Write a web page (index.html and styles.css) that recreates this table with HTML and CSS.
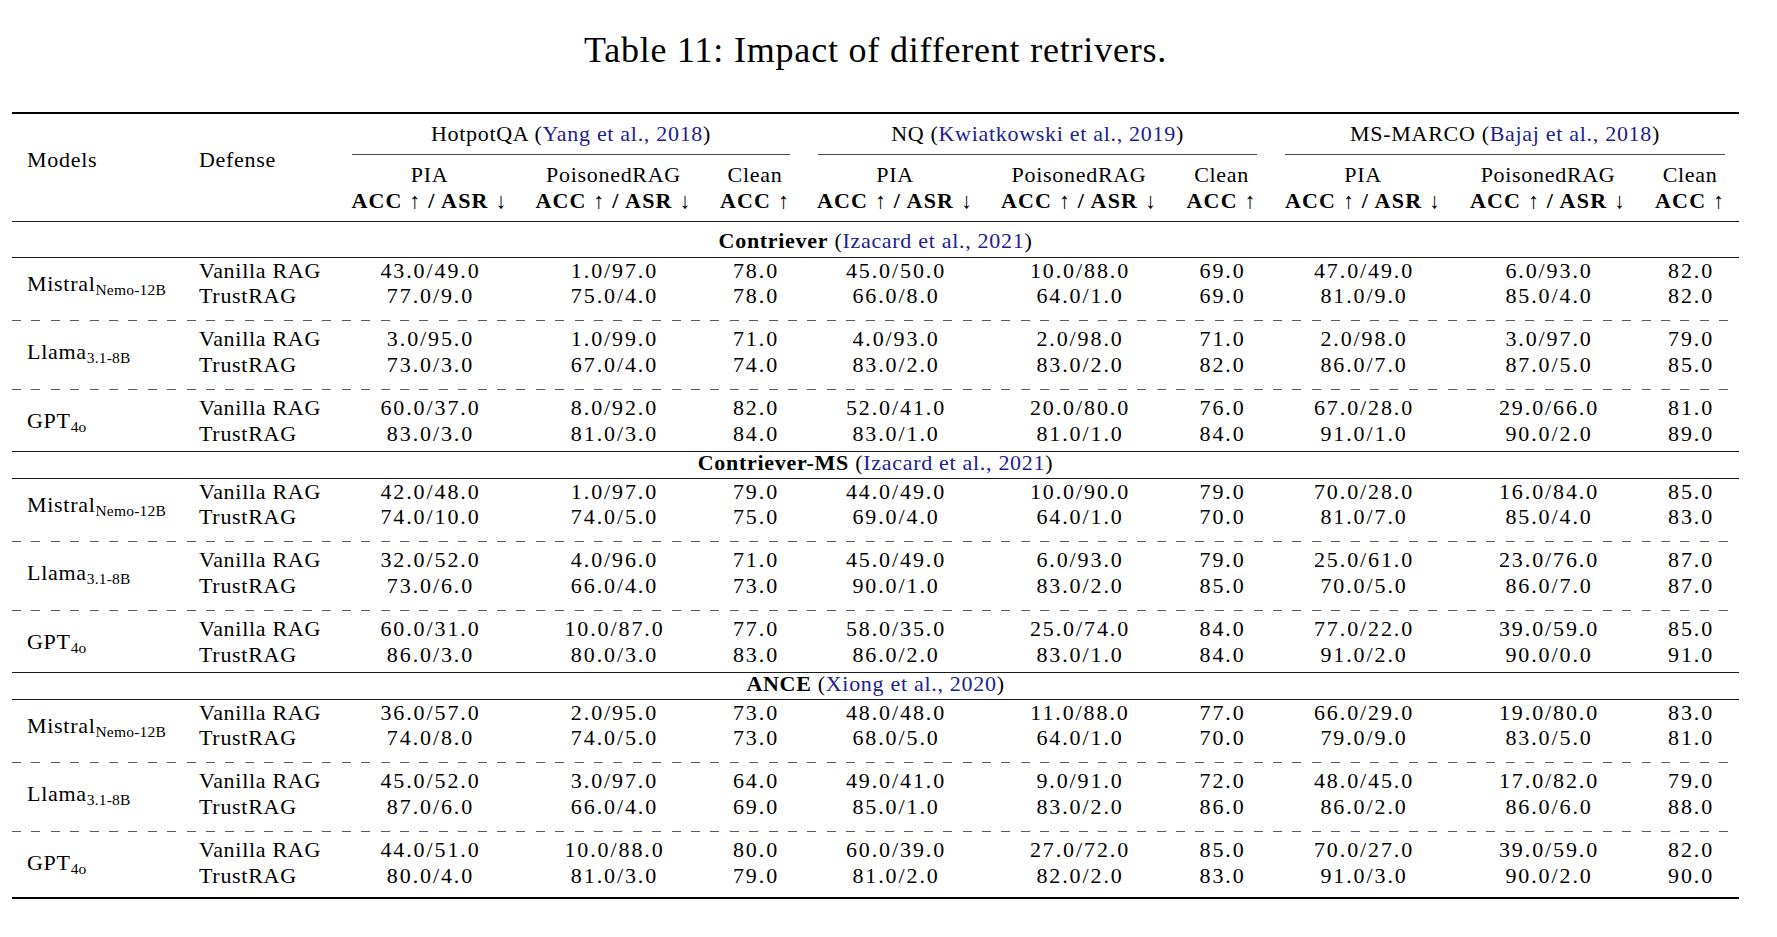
FILE: index.html
```html
<!DOCTYPE html>
<html lang="en">
<head>
<meta charset="utf-8">
<title>Table 11: Impact of different retrivers.</title>
<link rel="stylesheet" href="styles.css">
</head>
<body>
<div class="page">
  <div class="caption">Table 11: Impact of different retrivers.</div>
  <table class="tbl">
    <colgroup>
      <col class="c-model"><col class="c-def">
      <col class="c-a1"><col class="c-b1"><col class="c-c1">
      <col class="c-a2"><col class="c-b2"><col class="c-c2">
      <col class="c-a3"><col class="c-b3"><col class="c-c3">
    </colgroup>
    <thead>
      <tr class="h1">
        <th rowspan="3" class="lab">Models</th>
        <th rowspan="3" class="lab">Defense</th>
        <th colspan="3" class="grp"><div class="cmid">HotpotQA (<span class="cite">Yang et al., 2018</span>)</div></th>
        <th colspan="3" class="grp"><div class="cmid">NQ (<span class="cite">Kwiatkowski et al., 2019</span>)</div></th>
        <th colspan="3" class="grp"><div class="cmid">MS-MARCO (<span class="cite">Bajaj et al., 2018</span>)</div></th>
      </tr>
      <tr class="h2">
        <th>PIA</th><th>PoisonedRAG</th><th>Clean</th>
        <th>PIA</th><th>PoisonedRAG</th><th>Clean</th>
        <th>PIA</th><th>PoisonedRAG</th><th>Clean</th>
      </tr>
      <tr class="h3">
        <th><b>ACC</b> ↑ <b>/ ASR</b> ↓</th><th><b>ACC</b> ↑ <b>/ ASR</b> ↓</th><th><b>ACC</b> ↑</th>
        <th><b>ACC</b> ↑ <b>/ ASR</b> ↓</th><th><b>ACC</b> ↑ <b>/ ASR</b> ↓</th><th><b>ACC</b> ↑</th>
        <th><b>ACC</b> ↑ <b>/ ASR</b> ↓</th><th><b>ACC</b> ↑ <b>/ ASR</b> ↓</th><th><b>ACC</b> ↑</th>
      </tr>
    </thead>
    <tbody>
      <tr class="sec first"><td colspan="11"><b>Contriever</b> (<span class="cite">Izacard et al., 2021</span>)</td></tr>

      <tr class="r top g1"><td rowspan="2" class="model">Mistral<sub>Nemo-12B</sub></td><td class="def">Vanilla RAG</td><td>43.0/49.0</td><td>1.0/97.0</td><td>78.0</td><td>45.0/50.0</td><td>10.0/88.0</td><td>69.0</td><td>47.0/49.0</td><td>6.0/93.0</td><td>82.0</td></tr>
      <tr class="r bot g1"><td class="def">TrustRAG</td><td>77.0/9.0</td><td>75.0/4.0</td><td>78.0</td><td>66.0/8.0</td><td>64.0/1.0</td><td>69.0</td><td>81.0/9.0</td><td>85.0/4.0</td><td>82.0</td></tr>
      <tr class="dash"><td colspan="11"></td></tr>
      <tr class="r top g2"><td rowspan="2" class="model">Llama<sub>3.1-8B</sub></td><td class="def">Vanilla RAG</td><td>3.0/95.0</td><td>1.0/99.0</td><td>71.0</td><td>4.0/93.0</td><td>2.0/98.0</td><td>71.0</td><td>2.0/98.0</td><td>3.0/97.0</td><td>79.0</td></tr>
      <tr class="r bot g2"><td class="def">TrustRAG</td><td>73.0/3.0</td><td>67.0/4.0</td><td>74.0</td><td>83.0/2.0</td><td>83.0/2.0</td><td>82.0</td><td>86.0/7.0</td><td>87.0/5.0</td><td>85.0</td></tr>
      <tr class="dash"><td colspan="11"></td></tr>
      <tr class="r top g3"><td rowspan="2" class="model">GPT<sub>4o</sub></td><td class="def">Vanilla RAG</td><td>60.0/37.0</td><td>8.0/92.0</td><td>82.0</td><td>52.0/41.0</td><td>20.0/80.0</td><td>76.0</td><td>67.0/28.0</td><td>29.0/66.0</td><td>81.0</td></tr>
      <tr class="r bot g3"><td class="def">TrustRAG</td><td>83.0/3.0</td><td>81.0/3.0</td><td>84.0</td><td>83.0/1.0</td><td>81.0/1.0</td><td>84.0</td><td>91.0/1.0</td><td>90.0/2.0</td><td>89.0</td></tr>

      <tr class="sec"><td colspan="11"><b>Contriever-MS</b> (<span class="cite">Izacard et al., 2021</span>)</td></tr>

      <tr class="r top g1"><td rowspan="2" class="model">Mistral<sub>Nemo-12B</sub></td><td class="def">Vanilla RAG</td><td>42.0/48.0</td><td>1.0/97.0</td><td>79.0</td><td>44.0/49.0</td><td>10.0/90.0</td><td>79.0</td><td>70.0/28.0</td><td>16.0/84.0</td><td>85.0</td></tr>
      <tr class="r bot g1"><td class="def">TrustRAG</td><td>74.0/10.0</td><td>74.0/5.0</td><td>75.0</td><td>69.0/4.0</td><td>64.0/1.0</td><td>70.0</td><td>81.0/7.0</td><td>85.0/4.0</td><td>83.0</td></tr>
      <tr class="dash"><td colspan="11"></td></tr>
      <tr class="r top g2"><td rowspan="2" class="model">Llama<sub>3.1-8B</sub></td><td class="def">Vanilla RAG</td><td>32.0/52.0</td><td>4.0/96.0</td><td>71.0</td><td>45.0/49.0</td><td>6.0/93.0</td><td>79.0</td><td>25.0/61.0</td><td>23.0/76.0</td><td>87.0</td></tr>
      <tr class="r bot g2"><td class="def">TrustRAG</td><td>73.0/6.0</td><td>66.0/4.0</td><td>73.0</td><td>90.0/1.0</td><td>83.0/2.0</td><td>85.0</td><td>70.0/5.0</td><td>86.0/7.0</td><td>87.0</td></tr>
      <tr class="dash"><td colspan="11"></td></tr>
      <tr class="r top g3"><td rowspan="2" class="model">GPT<sub>4o</sub></td><td class="def">Vanilla RAG</td><td>60.0/31.0</td><td>10.0/87.0</td><td>77.0</td><td>58.0/35.0</td><td>25.0/74.0</td><td>84.0</td><td>77.0/22.0</td><td>39.0/59.0</td><td>85.0</td></tr>
      <tr class="r bot g3"><td class="def">TrustRAG</td><td>86.0/3.0</td><td>80.0/3.0</td><td>83.0</td><td>86.0/2.0</td><td>83.0/1.0</td><td>84.0</td><td>91.0/2.0</td><td>90.0/0.0</td><td>91.0</td></tr>

      <tr class="sec"><td colspan="11"><b>ANCE</b> (<span class="cite">Xiong et al., 2020</span>)</td></tr>

      <tr class="r top g1"><td rowspan="2" class="model">Mistral<sub>Nemo-12B</sub></td><td class="def">Vanilla RAG</td><td>36.0/57.0</td><td>2.0/95.0</td><td>73.0</td><td>48.0/48.0</td><td>11.0/88.0</td><td>77.0</td><td>66.0/29.0</td><td>19.0/80.0</td><td>83.0</td></tr>
      <tr class="r bot g1"><td class="def">TrustRAG</td><td>74.0/8.0</td><td>74.0/5.0</td><td>73.0</td><td>68.0/5.0</td><td>64.0/1.0</td><td>70.0</td><td>79.0/9.0</td><td>83.0/5.0</td><td>81.0</td></tr>
      <tr class="dash"><td colspan="11"></td></tr>
      <tr class="r top g2"><td rowspan="2" class="model">Llama<sub>3.1-8B</sub></td><td class="def">Vanilla RAG</td><td>45.0/52.0</td><td>3.0/97.0</td><td>64.0</td><td>49.0/41.0</td><td>9.0/91.0</td><td>72.0</td><td>48.0/45.0</td><td>17.0/82.0</td><td>79.0</td></tr>
      <tr class="r bot g2"><td class="def">TrustRAG</td><td>87.0/6.0</td><td>66.0/4.0</td><td>69.0</td><td>85.0/1.0</td><td>83.0/2.0</td><td>86.0</td><td>86.0/2.0</td><td>86.0/6.0</td><td>88.0</td></tr>
      <tr class="dash"><td colspan="11"></td></tr>
      <tr class="r top g3 end"><td rowspan="2" class="model">GPT<sub>4o</sub></td><td class="def">Vanilla RAG</td><td>44.0/51.0</td><td>10.0/88.0</td><td>80.0</td><td>60.0/39.0</td><td>27.0/72.0</td><td>85.0</td><td>70.0/27.0</td><td>39.0/59.0</td><td>82.0</td></tr>
      <tr class="r bot g3 end"><td class="def">TrustRAG</td><td>80.0/4.0</td><td>81.0/3.0</td><td>79.0</td><td>81.0/2.0</td><td>82.0/2.0</td><td>83.0</td><td>91.0/3.0</td><td>90.0/2.0</td><td>90.0</td></tr>
    </tbody>
  </table>
</div>
</body>
</html>
```

FILE: styles.css
```css
* { box-sizing: border-box; }

html, body {
  margin: 0;
  background: #ffffff;
}

body {
  font-family: "Liberation Serif", "Times New Roman", serif;
  color: #000000;
}

.page {
  padding-top: 32px;
}

.caption {
  width: 1727px;
  margin-left: 12px;
  font-size: 36px;
  line-height: 36px;
  letter-spacing: 0.8px;
  text-align: center;
}

.tbl {
  margin: 44px 0 0 12px;
  width: 1727px;
  table-layout: fixed;
  border-collapse: separate;
  border-spacing: 0;
  border-top: 2px solid #000;
  border-bottom: 2px solid #000;
  font-size: 22px;
  letter-spacing: 0.7px;
}

.c-model { width: 172px; }
.c-def { width: 154px; }
.c-a1 { width: 183px; }
.c-b1 { width: 185px; }
.c-c1 { width: 98px; }
.c-a2 { width: 182px; }
.c-b2 { width: 186px; }
.c-c2 { width: 99px; }
.c-a3 { width: 184px; }
.c-b3 { width: 186px; }
.c-c3 { width: 98px; }

.cite { color: #20208f; }

/* header */
.tbl th {
  font-weight: normal;
  padding: 0;
  line-height: 26px;
  text-align: center;
  white-space: nowrap;
}

.tbl th b { font-weight: bold; }

.tbl th.lab {
  text-align: left;
  padding: 0 0 16px 15px;
  vertical-align: middle;
  border-bottom: 1px solid #1a1a1a;
}

.h1 th.grp { padding-top: 7px; }

.cmid {
  margin: 0 14px;
  padding-bottom: 7px;
  border-bottom: 1px solid #4a4a4a;
}

.h2 th { padding-top: 7px; }

.h3 th {
  padding-bottom: 7px;
  border-bottom: 1px solid #1a1a1a;
  letter-spacing: 1.2px;
}

/* section rows */
.sec td {
  text-align: center;
  padding: 0 0 4px;
  line-height: 22px;
  border-bottom: 1px solid #1a1a1a;
  white-space: nowrap;
}

.sec.first td {
  padding: 6px 0 3px;
  line-height: 26px;
}

/* data rows */
.r td {
  padding: 0 0 0 2px;
  line-height: 26px;
  text-align: center;
  font-size: 22px;
  letter-spacing: 1.9px;
  white-space: nowrap;
}

.r td.def,
.r td.model {
  font-size: 22px;
  letter-spacing: 0.7px;
  text-align: left;
  padding-left: 15px;
}

.r td.model { vertical-align: middle; }

.model sub {
  font-size: 15.5px;
  letter-spacing: 0.2px;
  vertical-align: -4px;
  line-height: 0;
}

.r.g1.top td { line-height: 25px; }
.r.g2.top td,
.r.g3.top td { padding-top: 5px; }

.r.g1.bot td,
.r.g2.bot td { padding-bottom: 11px; }

.r.g1.top td.model,
.r.g2.top td.model { padding-bottom: 11px; }

.r.g3.bot td {
  padding-bottom: 4px;
  border-bottom: 1px solid #1a1a1a;
}

.r.g3.top td.model {
  padding-bottom: 4px;
  border-bottom: 1px solid #1a1a1a;
}

.r.g3.end.bot td,
.r.g3.end.top td.model {
  padding-bottom: 8px;
  border-bottom: 0;
}

/* dashed separators */
.dash td {
  padding: 0;
  height: 1px;
  line-height: 0;
  font-size: 0;
  background: repeating-linear-gradient(90deg, #5a5a5a 0 9px, transparent 9px 19.4px);
}
```
